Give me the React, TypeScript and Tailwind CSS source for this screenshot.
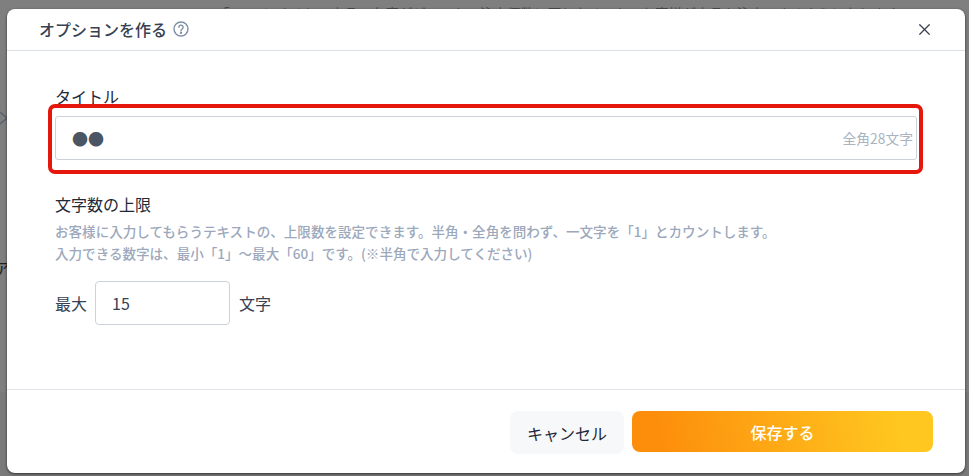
import { X } from 'lucide-react';

const font = { fontFamily: '"Noto Sans CJK JP", "Noto Sans", sans-serif' };

function HelpIcon() {
  return (
    <svg className="h-[16px] w-[16px]" viewBox="0 0 16 16" fill="none" stroke="#7f8ea5" strokeWidth="1.4">
      <circle cx="8" cy="8" r="7" />
      <path d="M5.9 6.2a2.1 2.1 0 1 1 3.2 1.8c-.7.4-1.1.8-1.1 1.6" strokeLinecap="round" />
      <circle cx="8" cy="11.7" r=".5" fill="#7f8ea5" />
    </svg>
  );
}

export default function App() {
  return (
    <div className="relative h-[476px] w-[969px] overflow-hidden bg-[#7f7f7f]" style={font}>
      <p className="whitespace-nowrap pl-[216px] pt-[3px] text-[13.6px] leading-[20px] text-[#4b4b4b]">
        「ON」にすると、商品の在庫がゼロでも、注文個数に戻りなくても、お客様が商品を注文できるようになります。
      </p>

      {/* page behind the dialog, only its left edge shows */}
      <div className="absolute left-0 top-[392px] h-[84px] w-full bg-[#7a7a7a]" />
      <svg className="absolute left-0 top-[110px] h-[16px] w-[8px]" viewBox="0 0 8 16" fill="none" stroke="#59626e" strokeWidth="1.6">
        <path d="M0 2l7 6-7 6" />
      </svg>
      <span className="absolute left-[-6px] top-[256px] text-[16px] leading-[24px] text-[#1f1f1f]">ア</span>

      <div className="absolute left-[7px] top-[9px] flex h-[464px] w-[958px] flex-col rounded-[8px] bg-white shadow-[0_1px_3px_rgba(0,0,0,0.6)]">
        <header className="flex h-[42px] items-center justify-between border-b border-[#d9e0e8] pb-[1px] pl-[32px] pr-[31px]">
          <div className="flex items-center gap-[6px]">
            <h2 className="text-[16px] font-medium leading-[24px] text-[#374151]">オプションを作る</h2>
            <HelpIcon />
          </div>
          <X className="h-[19px] w-[19px] text-[#374151]" strokeWidth={1.5} />
        </header>

        <div className="flex-1 pl-[48px] pr-[48px] pt-[33px]">
          <label className="block text-[16px] leading-[24px] text-[#1f2937]">タイトル</label>
          <div className="relative mt-[8px]">
            <div className="flex h-[44px] items-center justify-between rounded-[3px] border border-[#ccd1dc] pl-[16px] pr-[3px]">
              <span className="text-[16px] text-[#4b5563]">●●</span>
              <span className="text-[13.8px] text-[#a9b3c2]">全角28文字</span>
            </div>
            <div className="pointer-events-none absolute -left-[7px] -right-[6px] -top-[12px] -bottom-[14px] rounded-[7px] border-[4px] border-[#e5170c]" />
          </div>

          <h3 className="mt-[32px] text-[16px] leading-[24px] text-[#1f2937]">文字数の上限</h3>
          <p className="mt-[4px] text-[13.55px] font-medium leading-[22px] text-[#9ca8bb]">
            お客様に入力してもらうテキストの、上限数を設定できます。半角・全角を問わず、一文字を「1」とカウントします。
            <br />
            入力できる数字は、最小「1」〜最大「60」です。(※半角で入力してください)
          </p>
          <div className="mt-[17px] flex items-center gap-[8px] text-[16px] text-[#374151]">
            <span>最大</span>
            <div className="flex h-[44px] w-[135px] items-center rounded-[4px] border border-[#ccd1dc] pb-[1px] pl-[16px]">15</div>
            <span className="ml-[1px]">文字</span>
          </div>
        </div>

        <footer className="flex h-[84px] items-start justify-end gap-[8px] border-t border-[#e2e2ea] pr-[32px] pt-[21px]">
          <button className="h-[43px] w-[114px] rounded-[8px] bg-[#f7f8fa] text-[16px] text-[#1f2937]">キャンセル</button>
          <button className="h-[41px] w-[301px] rounded-[8px] bg-[linear-gradient(80deg,#fd8e0c_10%,#ffc71f_88%)] text-[16px] font-medium text-white">保存する</button>
        </footer>
      </div>
    </div>
  );
}
